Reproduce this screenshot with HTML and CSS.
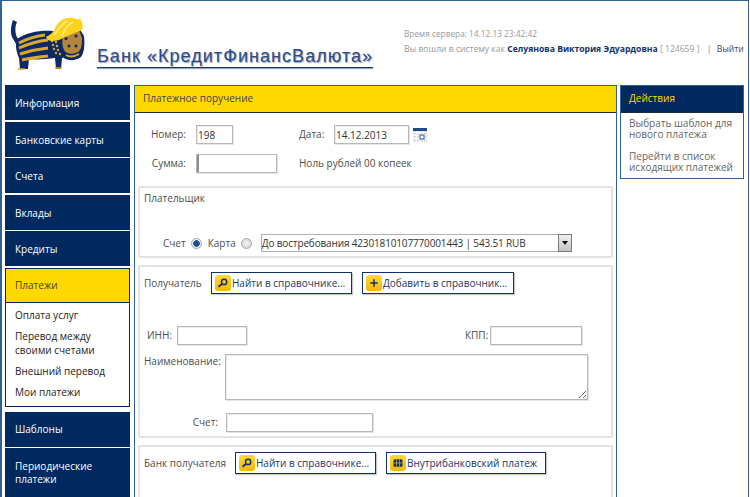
FILE: index.html
```html
<!DOCTYPE html>
<html lang="ru">
<head>
    <meta charset="UTF-8">
    <meta name="viewport" content="width=device-width, initial-scale=1.0">
    <title>Банк «КредитФинансВалюта»</title>
    <link rel="stylesheet" href="styles.css">
</head>
<body>
    <div class="page">
        <header class="header">
            <div class="brand">
                <svg class="logo" viewBox="8 14 80 60" width="80" height="60" aria-hidden="true">
                    <!-- tail -->
                    <path d="M13 20c-2 6-3 11-1 17l4 7 3-3-3-6c-1-5-1-9 1-13z" fill="#0e2a66"/>
                    <!-- body and legs -->
                    <path d="M17 39c10-7 24-9 36-8l8 1 10 24-9 2-1 11h-5l-1-11c-8 1-18 2-26 1l-1 10h-8l-1-11c-3-7-4-14-2-19z" fill="#0e2a66"/>
                    <!-- stripes -->
                    <path d="M19 43c8-4 16-7 26-8" stroke="#d9a92c" stroke-width="3" fill="none"/>
                    <path d="M19 48c9-4 19-7 29-8" stroke="#d9a92c" stroke-width="3" fill="none"/>
                    <path d="M20 54c9-3 19-5 28-6" stroke="#d9a92c" stroke-width="3" fill="none"/>
                    <path d="M22 60c8-2 17-3 26-4" stroke="#d9a92c" stroke-width="3" fill="none"/>
                    <g fill="#d9a92c">
                        <circle cx="52" cy="41" r="1.2"/><circle cx="56" cy="42" r="1.2"/><circle cx="53" cy="45" r="1.2"/>
                        <circle cx="57" cy="46" r="1.2"/><circle cx="54" cy="49" r="1.2"/><circle cx="58" cy="50" r="1.2"/>
                        <circle cx="56" cy="53" r="1.2"/><circle cx="60" cy="54" r="1.2"/>
                    </g>
                    <path d="M18 69h7M55 68h7" stroke="#d9a92c" stroke-width="1.5"/>
                    <!-- head -->
                    <path d="M60 38l19-10 5 8c1 9 0 17-3 21-5 4-13 4-17 1-3-6-4-13-4-20z" fill="#0e2a66"/>
                    <path d="M63 37l16-7 3 8c0 8-1 12-4 14-6 3-12 2-14-2-2-4-2-9-1-13z" fill="#b5853f"/>
                    <circle cx="66" cy="38.500" r="1.600" fill="#0e2a66"/>
                    <circle cx="76" cy="36" r="1.600" fill="#0e2a66"/>
                    <circle cx="69" cy="46" r="1.500" fill="#0e2a66"/>
                    <circle cx="76" cy="46" r="1.500" fill="#0e2a66"/>
                    <path d="M66 55c3 2 8 2 13-1" stroke="#d9a92c" stroke-width="2" fill="none"/>
                    <!-- helmet -->
                    <path d="M46 37c4-2 7-4 9-9 3-6 9-11 17-10 3 0 5 1 7 2l1-4 1 5c2 3 2 7 1 9l-17 7c-5 3-9 4-13 4-2 0-5-1-6-4z" fill="#fdd21d"/>
                    <path d="M54 35c4-4 6-10 13-14M62 36c2-5 5-11 11-14" stroke="#fff3a8" stroke-width="1.300" fill="none"/>
                </svg>
                <div class="brand-name">Банк «КредитФинансВалюта»</div>
            </div>
            <div class="session">
                <div class="server-time">Время сервера: 14.12.13 23:42:42</div>
                <div class="user-line">
                    Вы вошли в систему как <b class="user-name">Селуянова Виктория Эдуардовна</b> [ 124659 ]
                    <span class="user-sep">|</span>
                    <a class="logout" href="#">Выйти</a>
                </div>
            </div>
        </header>

        <div class="columns">
            <nav class="nav">
                <a class="nav-item nav-dim" href="#">Информация</a>
                <a class="nav-item" href="#">Банковские карты</a>
                <a class="nav-item nav-dim" href="#">Счета</a>
                <a class="nav-item" href="#">Вклады</a>
                <a class="nav-item nav-dim" href="#">Кредиты</a>
                <a class="nav-item nav-active" href="#">Платежи</a>
                <div class="subnav">
                    <a class="subnav-item" href="#">Оплата услуг</a>
                    <a class="subnav-item" href="#">Перевод между своими счетами</a>
                    <a class="subnav-item" href="#">Внешний перевод</a>
                    <a class="subnav-item" href="#">Мои платежи</a>
                </div>
                <a class="nav-item nav-low" href="#">Шаблоны</a>
                <a class="nav-item nav-low nav-tall" href="#">Периодические платежи</a>
            </nav>

            <main class="main">
                <h1 class="main-title">Платежное поручение</h1>

                <div class="doc-row doc-row-first">
                    <label class="doc-label">Номер:</label>
                    <input class="input input-number" value="198">
                    <label class="doc-label-date">Дата:</label>
                    <input class="input input-date" value="14.12.2013">
                    <svg class="calendar" viewBox="0 0 14 14" width="14" height="14" aria-hidden="true">
                        <rect x="0" y="0" width="14" height="14" fill="#dfe1e4"/>
                        <path d="M0 4.500h14M0 7.500h14M0 10.500h14M3.500 3v11M7 3v11M10.500 3v11" stroke="#fff" stroke-width="1"/>
                        <rect x="0" y="0" width="14" height="3" fill="#1f4a8c"/>
                        <rect x="7" y="7" width="4" height="4" fill="#fff" stroke="#2a5aa0"/>
                    </svg>
                </div>
                <div class="doc-row doc-row-second">
                    <label class="doc-label">Сумма:</label>
                    <input class="input input-sum" value="">
                    <span class="sum-words">Ноль рублей 00 копеек</span>
                </div>

                <section class="box box-payer">
                    <div class="box-title">Плательщик</div>
                    <div class="payer-row">
                        <span>Счет</span>
                        <input class="radio radio-on" type="radio" name="src" checked>
                        <span>Карта</span>
                        <input class="radio" type="radio" name="src">
                        <div class="select-wrap">
                            <select class="select">
                                <option>До востребования 42301810107770001443 | 543.51 RUB</option>
                            </select>
                            <span class="select-arrow"></span>
                        </div>
                    </div>
                </section>

                <section class="box box-payee">
                    <div class="box-head">
                        <span class="box-head-label">Получатель</span>
                        <a class="btn" href="#">
                            <span class="btn-icon">
                                <svg viewBox="0 0 16 16" width="12" height="12"><circle cx="9.500" cy="6.500" r="3.500" fill="none" stroke="#12306b" stroke-width="2"/><path d="M7 9l-5 4" stroke="#12306b" stroke-width="2.500"/></svg>
                            </span>Найти в справочнике...
                        </a>
                        <a class="btn btn-add" href="#">
                            <span class="btn-icon">
                                <svg viewBox="0 0 16 16" width="12" height="12"><path d="M8 3v10M3 8h10" stroke="#12306b" stroke-width="2"/></svg>
                            </span>Добавить в справочник...
                        </a>
                    </div>
                    <div class="payee-codes">
                        <label class="inn-label">ИНН:</label>
                        <input class="input input-inn">
                        <label class="kpp-label">КПП:</label>
                        <input class="input input-kpp">
                    </div>
                    <div class="payee-name">
                        <label class="name-label">Наименование:</label>
                        <textarea class="input textarea"></textarea>
                    </div>
                    <div class="payee-account">
                        <label class="account-label">Счет:</label>
                        <input class="input input-account">
                    </div>
                </section>

                <section class="box box-bank">
                    <div class="box-head">
                        <span class="box-head-label bank-label">Банк получателя</span>
                        <a class="btn" href="#">
                            <span class="btn-icon">
                                <svg viewBox="0 0 16 16" width="12" height="12"><circle cx="9.500" cy="6.500" r="3.500" fill="none" stroke="#12306b" stroke-width="2"/><path d="M7 9l-5 4" stroke="#12306b" stroke-width="2.500"/></svg>
                            </span>Найти в справочнике...
                        </a>
                        <a class="btn btn-inner" href="#">
                            <span class="btn-icon">
                                <svg viewBox="0 0 16 16" width="12" height="12"><rect x="2" y="3" width="12" height="10" rx="2" fill="#12306b"/><path d="M2 8h12M6 3v10M10 3v10" stroke="#d9b020" stroke-width="1"/></svg>
                            </span>Внутрибанковский платеж
                        </a>
                    </div>
                </section>
            </main>

            <aside class="aside">
                <h2 class="aside-title">Действия</h2>
                <div class="aside-body">
                    <a class="aside-link" href="#">Выбрать шаблон для нового платежа</a>
                    <a class="aside-link" href="#">Перейти в список исходящих платежей</a>
                </div>
            </aside>
        </div>
    </div>
</body>
</html>
```

FILE: styles.css
```css
:root {
    --navy: #002a5f;
    --yellow: #ffd800;
    --frame: #2f6098;
    --text: #4d4d4d;
    --line: #e3e3e3;
}

* {
    margin: 0;
    padding: 0;
    box-sizing: border-box;
    font-family: "Open Sans", sans-serif;
}

html, body {
    height: 497px;
    overflow: hidden;
    background: #fff;
}

a {
    text-decoration: none;
    color: inherit;
}

.page {
    width: 749px;
    height: 497px;
    border: 1px solid var(--frame);
    border-bottom: none;
    border-left-width: 2px;
    overflow: hidden;
    font-size: 10px;
    line-height: 15px;
    color: var(--text);
}

/* header */
.header {
    display: flex;
    height: 84px;
}

.brand {
    display: flex;
    flex: none;
    width: 402px;
    padding: 13px 0 0 6px;
}

.logo {
    flex: none;
}

.brand-name {
    margin: 32px 0 0 9px;
    height: 22px;
    font-family: "Liberation Sans", sans-serif;
    font-size: 18px;
    line-height: 21px;
    letter-spacing: 1.05px;
    color: #2b4c86;
    border-bottom: 1px solid #17386f;
    text-shadow: 1px 1px 1px #9aa4b5;
    box-shadow: 0 1px 1px #9aa4b5;
    white-space: nowrap;
}

.session {
    padding-top: 27px;
    font-size: 8.3px;
    color: #999;
    white-space: nowrap;
}

.server-time {
    line-height: 12px;
}

.user-line {
    margin-top: 2px;
    line-height: 15px;
    font-size: 8.6px;
}

.user-name {
    color: #12306b;
    font-weight: 700;
}

.user-sep {
    margin: 0 3px 0 5px;
    color: #6a7fa8;
}

.logout {
    color: #45406e;
}

/* three columns */
.columns {
    display: flex;
    align-items: flex-start;
    padding-left: 3px;
}

.nav {
    flex: none;
    width: 125px;
    margin-right: 4px;
    display: flex;
    flex-direction: column;
    color: #fff;
}

.nav-item {
    display: flex;
    align-items: center;
    flex: none;
    height: 35px;
    padding: 2px 0 0 10px;
    margin-bottom: 1px;
    background: var(--navy);
    color: #fff;
}

.nav-dim {
    margin-bottom: 2px;
}

.nav-low {
    padding-top: 0;
}

.nav-tall {
    height: 49px;
    margin-bottom: 0;
    line-height: 13px;
}

.nav-active {
    background: var(--yellow);
    color: #444;
    height: 35px;
    margin-bottom: 0;
    border: 1px solid var(--navy);
    padding: 0 0 0 9px;
}

.subnav {
    display: flex;
    flex-direction: column;
    flex: none;
    gap: 7px;
    height: 104px;
    padding: 5px 9px 0;
    margin-bottom: 5px;
    border: 1px solid var(--navy);
    border-top: none;
    color: #222;
}

.subnav-item {
    line-height: 14px;
}

.main {
    flex: none;
    width: 483px;
    height: 420px;
    margin-right: 3px;
    padding: 0 3px;
    border: 1px solid var(--frame);
    border-bottom: none;
}

.main-title {
    height: 27px;
    margin: 0 -3px;
    padding-left: 8px;
    font-size: 10px;
    font-weight: 400;
    line-height: 25px;
    color: #444;
    background: var(--yellow);
    border-bottom: 1px solid #1c2b3e;
}

/* form */
.doc-row {
    display: flex;
    align-items: center;
}

.doc-row-first {
    margin-top: 12px;
}

.doc-row-second {
    margin-top: 10px;
}

.doc-label {
    width: 48px;
    margin-right: 10px;
    text-align: right;
}

.doc-label-date {
    width: 27px;
    margin: 0 8px 0 66px;
}

.input {
    display: block;
    height: 19px;
    padding: 0 1px;
    border: 1px solid #b8b8bc;
    box-shadow: inset 1px 1px 0 #ececec, 1px 1px 0 #e4e4e4;
    font-size: 10px;
    color: #333;
    background: #fff;
    outline: none;
}

.input-number {
    width: 37px;
}

.input-date {
    width: 75px;
}

.calendar {
    margin-left: 4px;
}

.input-sum {
    width: 81px;
    box-shadow: inset 2px 0 0 #8d8d8d, 1px 1px 0 #e4e4e4;
}

.sum-words {
    margin-left: 22px;
}

.box {
    border: 2px solid var(--line);
    border-radius: 2px;
    padding-left: 4px;
    margin-bottom: 7px;
    width: 475px;
}

.box-payer {
    height: 72px;
    margin-top: 13px;
}

.box-title {
    padding-top: 3px;
}

.payer-row {
    display: flex;
    align-items: center;
    margin: 28px 0 0 19px;
}

.radio {
    appearance: none;
    flex: none;
    width: 11px;
    height: 11px;
    margin: 0 6px 0 5px;
    border: 1px solid #a9a9a9;
    border-radius: 50%;
    background: radial-gradient(circle, #f4f4f4, #cfcfcf);
}

.radio-on {
    background: radial-gradient(circle, #1c4f9c 0 3px, #e8e8e8 3.500px);
}

.select-wrap {
    position: relative;
    flex: none;
    margin-left: 3px;
}

.select {
    appearance: none;
    display: block;
    width: 311px;
    height: 18px;
    padding-left: 0;
    border: 1px solid #b0b0b0;
    background: #fff;
    font-size: 10px;
    letter-spacing: -0.15px;
    color: #333;
}

.select-arrow {
    position: absolute;
    top: 0;
    right: 0;
    width: 14px;
    height: 18px;
    background: linear-gradient(#f0f0f0, #c4c4c4);
    border: 1px solid #777;
}

.select-arrow::after {
    content: "";
    position: absolute;
    left: 3px;
    top: 6px;
    border: 3px solid transparent;
    border-top: 4px solid #111;
}

.box-payee {
    height: 173px;
}

.box-bank {
    height: 60px;
    margin-bottom: 0;
}

.box-head {
    display: flex;
    align-items: center;
    padding-top: 5px;
}

.box-head-label {
    flex: none;
    width: 67px;
}

.bank-label {
    width: 91px;
}

.btn {
    display: flex;
    align-items: center;
    flex: none;
    width: 141px;
    height: 22px;
    margin-right: 10px;
    padding-left: 3px;
    border: 1px solid #12306b;
    box-shadow: 1px 1px 1px #c8c8c8;
    color: #1d3560;
    white-space: nowrap;
}

.btn-add {
    width: 152px;
}

.btn-inner {
    width: 160px;
}

.btn-icon {
    display: flex;
    align-items: center;
    justify-content: center;
    width: 16px;
    height: 16px;
    margin-right: 1px;
    border-radius: 3px;
    background: linear-gradient(#ffd93a, #f5b800);
}

.payee-codes {
    display: flex;
    align-items: center;
    margin-top: 32px;
}

.inn-label {
    margin: 0 5px 0 3px;
}

.kpp-label {
    margin: 0 2px 0 218px;
}

.input-inn {
    width: 70px;
}

.input-kpp {
    width: 92px;
}

.payee-name {
    display: flex;
    margin-top: 9px;
}

.name-label {
    flex: none;
    width: 81px;
}

.textarea {
    width: 363px;
    height: 46px;
    resize: both;
}

.payee-account {
    display: flex;
    align-items: center;
    margin-top: 13px;
}

.account-label {
    flex: none;
    width: 74px;
    margin-right: 8px;
    text-align: right;
}

.input-account {
    width: 147px;
}

/* right column */
.aside {
    flex: none;
    width: 124px;
    border: 1px solid var(--frame);
    color: #666;
}

.aside-title {
    height: 27px;
    padding-left: 8px;
    font-size: 10px;
    font-weight: 400;
    line-height: 25px;
    color: var(--yellow);
    background: var(--navy);
    border-bottom: 1px solid #1c2b3e;
}

.aside-body {
    display: flex;
    flex-direction: column;
    gap: 11px;
    height: 65px;
    padding: 5px 4px 0 8px;
}

.aside-link {
    line-height: 11px;
    font-size: 10px;
}
```
